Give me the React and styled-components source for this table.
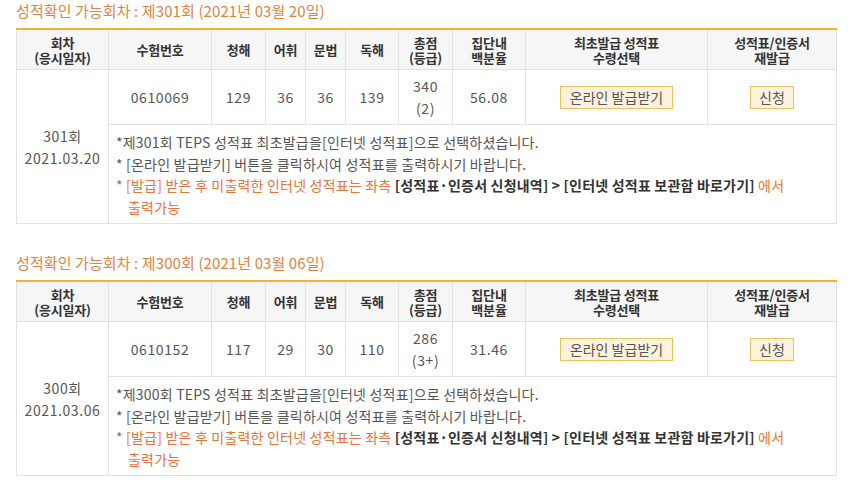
import React from 'react'
import styled, { createGlobalStyle } from 'styled-components'

const GlobalStyle = createGlobalStyle`
  body {
    margin: 0;
    background: #fff;
    font-family: "Noto Sans CJK KR", "Noto Sans", sans-serif;
    color: #555;
  }
`

const Page = styled.div`
  padding: 1px 12px 0 16px;
`

const Section = styled.section`
  margin-bottom: 29px;
`

const Title = styled.h3`
  margin: 0 0 7px;
  font-size: 15px;
  font-weight: 400;
  line-height: 20px;
  color: #e0833f;
  letter-spacing: 0.1px;
`

const Table = styled.table`
  width: 820px;
  border-collapse: collapse;
  table-layout: fixed;
  border-top: 2px solid #eeb534;
  font-size: 14px;
`

const Th = styled.th`
  height: 39px;
  padding: 0;
  background: #f6f6f6;
  border: 1px solid #e2e2e2;
  border-top: none;
  color: #333;
  font-size: 13px;
  font-weight: 700;
  line-height: 15px;
  letter-spacing: -0.2px;
  text-align: center;
`

const Td = styled.td`
  height: 54px;
  padding: 0;
  border: 1px solid #e2e2e2;
  text-align: center;
  line-height: 22px;
  letter-spacing: 0.6px;
  color: #555;
`

const NoteCell = styled.td`
  border: 1px solid #e2e2e2;
  padding: 7px 8px 5px 7px;
  text-align: left;
  line-height: 21.5px;
  letter-spacing: 0.2px;
  color: #555;
`

const Note = styled.p`
  margin: 0;
  padding-left: ${({ $hang }) => ($hang ? '12px' : '0')};
  text-indent: ${({ $hang }) => ($hang ? '-12px' : '0')};
  color: ${({ $accent }) => ($accent ? '#e2763b' : '#555')};
`

const Mark = styled.span`
  color: #777;
`

const Strong = styled.b`
  color: #333;
  font-weight: 700;
  letter-spacing: 0.2px;
`

const Button = styled.button`
  height: 23px;
  padding: 0 ${({ $wide }) => ($wide ? '9px' : '8px')};
  border: 1px solid #e6c35c;
  background: #fcf2de;
  color: #555;
  font: inherit;
  font-size: 14px;
  line-height: 20px;
  letter-spacing: 0;
  cursor: pointer;
`

const widths = [92, 103, 54, 40, 40, 53, 54, 73, 182, 129]

const rounds = [
  {
    no: 301,
    date: '2021년 03월 20일',
    short: '2021.03.20',
    id: '0610069',
    l: 129,
    v: 36,
    g: 36,
    r: 139,
    total: 340,
    grade: '2',
    pct: '56.08',
  },
  {
    no: 300,
    date: '2021년 03월 06일',
    short: '2021.03.06',
    id: '0610152',
    l: 117,
    v: 29,
    g: 30,
    r: 110,
    total: 286,
    grade: '3+',
    pct: '31.46',
  },
]

const ScoreTable = ({ d }) => (
  <Section>
    <Title>
      성적확인 가능회차 : 제{d.no}회 ({d.date})
    </Title>
    <Table>
      <colgroup>
        {widths.map((w, i) => (
          <col key={i} style={{ width: w }} />
        ))}
      </colgroup>
      <thead>
        <tr>
          <Th>
            회차
            <br />
            (응시일자)
          </Th>
          <Th>수험번호</Th>
          <Th>청해</Th>
          <Th>어휘</Th>
          <Th>문법</Th>
          <Th>독해</Th>
          <Th>
            총점
            <br />
            (등급)
          </Th>
          <Th>
            집단내
            <br />
            백분율
          </Th>
          <Th>
            최초발급 성적표
            <br />
            수령선택
          </Th>
          <Th>
            성적표/인증서
            <br />
            재발급
          </Th>
        </tr>
      </thead>
      <tbody>
        <tr>
          <Td rowSpan={2}>
            {d.no}회
            <br />
            {d.short}
          </Td>
          <Td>{d.id}</Td>
          <Td>{d.l}</Td>
          <Td>{d.v}</Td>
          <Td>{d.g}</Td>
          <Td>{d.r}</Td>
          <Td>
            {d.total}
            <br />({d.grade})
          </Td>
          <Td>{d.pct}</Td>
          <Td>
            <Button $wide>온라인 발급받기</Button>
          </Td>
          <Td>
            <Button>신청</Button>
          </Td>
        </tr>
        <tr>
          <NoteCell colSpan={9}>
            <Note>*제{d.no}회 TEPS 성적표 최초발급을[인터넷 성적표]으로 선택하셨습니다.</Note>
            <Note>* [온라인 발급받기] 버튼을 클릭하시여 성적표를 출력하시기 바랍니다.</Note>
            <Note $hang $accent>
              <Mark>* </Mark>[발급] 받은 후 미출력한 인터넷 성적표는 좌측{' '}
              <Strong>[성적표·인증서 신청내역] &gt; [인터넷 성적표 보관함 바로가기]</Strong> 에서
              <br />
              출력가능
            </Note>
          </NoteCell>
        </tr>
      </tbody>
    </Table>
  </Section>
)

export default function App() {
  return (
    <>
      <GlobalStyle />
      <Page>
        {rounds.map((d) => (
          <ScoreTable key={d.no} d={d} />
        ))}
      </Page>
    </>
  )
}
